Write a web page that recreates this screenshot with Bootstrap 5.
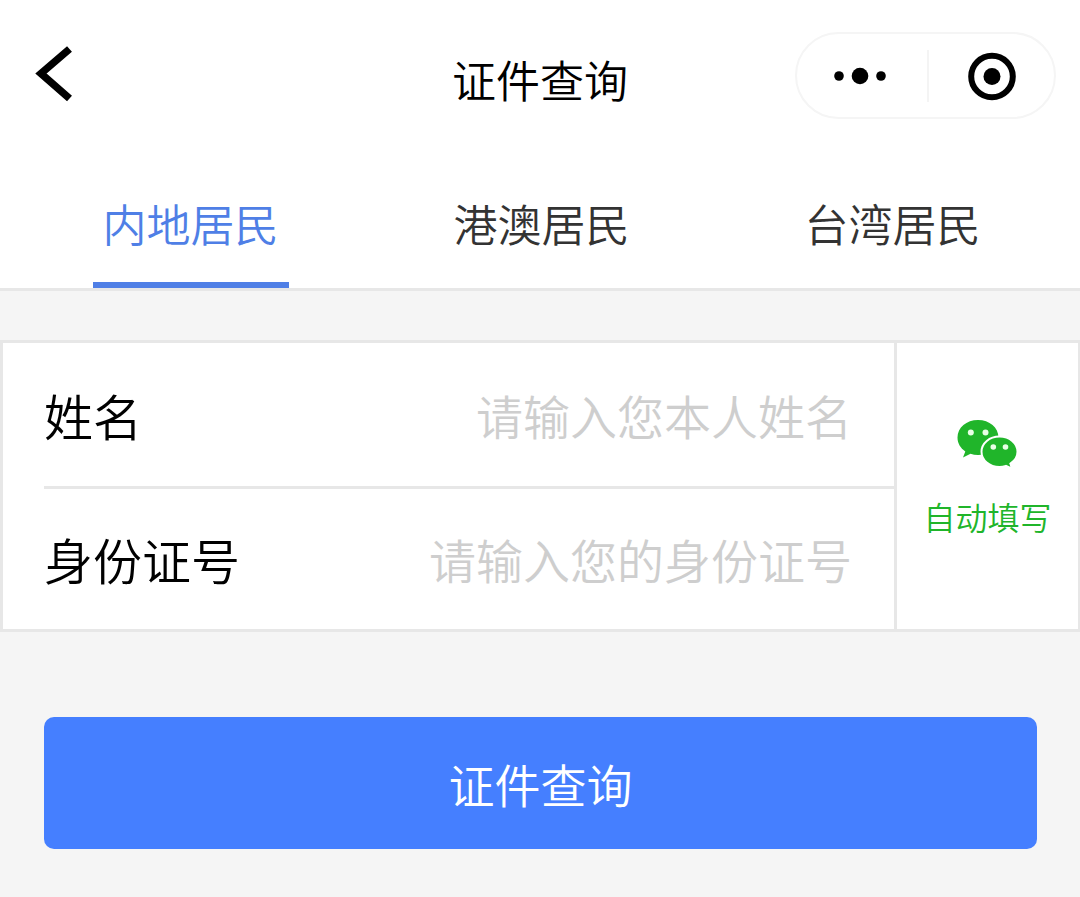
<!DOCTYPE html>
<html lang="zh-CN">
<head>
<meta charset="utf-8">
<meta name="viewport" content="width=device-width, initial-scale=1">
<title>证件查询</title>
<link rel="stylesheet" href="https://cdn.jsdelivr.net/npm/bootstrap@5.3.0/dist/css/bootstrap.min.css">
<style>
  :root { --line: #e7e7e7; --accent: #457fff; --tab-accent: #4f7fe6; --wx: #20b52a; }
  body { font-family: "Noto Sans CJK SC", sans-serif; font-weight: 350; background: #f5f5f5; color: #000; }
  .topbar { display: grid; grid-template-columns: 1fr auto 1fr; padding: 32px 24px 0; }
  .page-title { font-size: 44px; line-height: 64px; font-weight: 350; padding-top: 15px; }
  .back-btn { width: 60px; height: 84px; }
  .capsule { width: 261px; height: 87px; border: 2px solid #f5f5f5; border-radius: 44px; }
  .capsule-btn { flex: 1 1 0; }
  .capsule-btn + .capsule-btn { padding-left: 6px; }
  .capsule-more { padding-right: 4px; }
  .capsule-divider { width: 2px; height: 52px; background: #f4f4f4; }
  .tabs { padding: 56px 12px 0 15px; border-bottom: 3px solid var(--line); }
  .tab-link { font-size: 44px; line-height: 64px; color: #333; padding: 16px 10px 27px; border-bottom: 6px solid transparent; text-decoration: none; }
  .tab-link.active { color: var(--tab-accent); border-color: var(--tab-accent); }
  .id-form { margin-top: 49px; border: 3px solid var(--line); border-right-width: 2px; }
  .fields { padding-left: 41px; }
  .field-row { height: 143px; padding-right: 42px; }
  .field-row + .field-row { border-top: 3px solid var(--line); }
  .field-label { font-size: 49px; line-height: 72px; }
  .field-input { font-size: 47px; line-height: 72px; font-weight: 350; min-width: 0; outline: 0; }
  .field-input::placeholder { color: #cecece; opacity: 1; }
  .autofill { width: 184px; border-left: 3px solid var(--line) !important; color: var(--wx); font-size: 32px; line-height: 48px; font-weight: 350; gap: 23px; padding-bottom: 13px; }
  .submit-wrap { padding: 85px 43px 48px 44px; }
  .submit-btn { --bs-btn-bg: var(--accent); --bs-btn-color: #fff; --bs-btn-hover-bg: #3a72ee; --bs-btn-hover-color: #fff; font-size: 46px; line-height: 68px; font-weight: 350; padding: 32px; border: 0; border-radius: 10px; }
</style>
</head>
<body>
<header class="bg-white">
  <div class="topbar">
    <button type="button" class="back-btn btn p-0 border-0 text-start" aria-label="返回">
      <svg width="60" height="84" viewBox="24 32 60 84" fill="none" stroke="#000" stroke-width="7.500" class="d-block"><path d="M69.500 49 41 73.500 69.500 98.500"/></svg>
    </button>
    <h1 class="page-title mb-0">证件查询</h1>
    <div class="capsule d-flex align-items-center ms-auto">
      <button type="button" class="capsule-btn capsule-more btn py-0 ps-0 border-0 h-100 d-flex align-items-center justify-content-center" aria-label="更多">
        <svg width="52" height="18" viewBox="0 0 52 18"><circle cx="5" cy="9" r="4.800"/><circle cx="26" cy="9" r="8.300"/><circle cx="47" cy="9" r="4.800"/></svg>
      </button>
      <span class="capsule-divider"></span>
      <button type="button" class="capsule-btn btn p-0 border-0 h-100 d-flex align-items-center justify-content-center" aria-label="关闭">
        <svg width="50" height="50" viewBox="0 0 50 50"><circle cx="26" cy="25.500" r="20.800" fill="none" stroke="#000" stroke-width="6"/><circle cx="26" cy="25.500" r="8.500"/></svg>
      </button>
    </div>
  </div>
  <nav class="tabs row g-0 text-center">
    <div class="col d-flex justify-content-center"><a class="tab-link active" href="#" aria-current="page">内地居民</a></div>
    <div class="col d-flex justify-content-center"><a class="tab-link" href="#">港澳居民</a></div>
    <div class="col d-flex justify-content-center"><a class="tab-link" href="#">台湾居民</a></div>
  </nav>
</header>
<main>
  <form>
    <div class="id-form bg-white d-flex">
      <div class="fields flex-fill">
        <div class="field-row d-flex align-items-center">
          <label class="field-label flex-shrink-0" for="name">姓名</label>
          <input class="field-input flex-fill border-0 p-0 bg-transparent text-end" id="name" type="text" placeholder="请输入您本人姓名">
        </div>
        <div class="field-row d-flex align-items-center">
          <label class="field-label flex-shrink-0" for="idno">身份证号</label>
          <input class="field-input flex-fill border-0 p-0 bg-transparent text-end" id="idno" type="text" placeholder="请输入您的身份证号">
        </div>
      </div>
      <button type="button" class="autofill btn rounded-0 border-0 px-0 pt-0 flex-shrink-0 d-flex flex-column align-items-center justify-content-center">
        <svg width="64" height="50" viewBox="0 0 64 50">
          <path fill="#20b52a" d="M22 1C10.500 1 1.500 8.500 1.500 18.500c0 5.800 3 10.600 7.800 13.900L7 38.500l7.500-3.700c2.300.8 4.800 1.200 7.500 1.200 11.500 0 20.500-7.500 20.500-17.500S33.500 1 22 1z"/>
          <path fill="#20b52a" stroke="#fff" stroke-width="2" d="M43.500 17.500c-10 0-18 6.700-18 15.200s8 15.200 18 15.200c2.300 0 4.400-.4 6.400-1l6.200 2.700-1.700-5c4.300-2.800 7.100-7.100 7.100-11.900 0-8.500-8-15.200-18-15.200z"/>
          <g fill="#e9ffe6"><circle cx="14.800" cy="13.500" r="3"/><circle cx="29.500" cy="13.500" r="3"/><circle cx="37.300" cy="28" r="2.800"/><circle cx="49.500" cy="28" r="2.800"/></g>
        </svg>
        <span>自动填写</span>
      </button>
    </div>
    <div class="submit-wrap">
      <button type="submit" class="submit-btn btn d-block w-100">证件查询</button>
    </div>
  </form>
</main>
<script src="https://cdn.jsdelivr.net/npm/bootstrap@5.3.0/dist/js/bootstrap.bundle.min.js"></script>
</body>
</html>
